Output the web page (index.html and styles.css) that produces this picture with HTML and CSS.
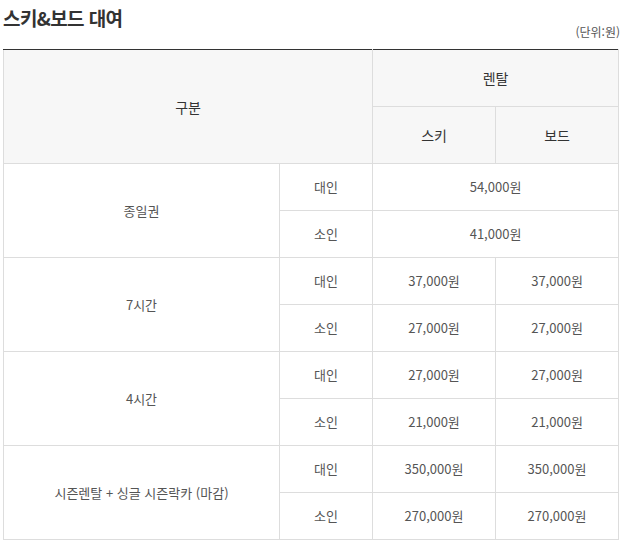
FILE: index.html
```html
<!DOCTYPE html>
<html lang="ko">
<head>
<meta charset="utf-8">
<link rel="stylesheet" href="styles.css">
</head>
<body>
<div class="wrap">
  <h2 class="title">스키&amp;보드 대여</h2>
  <p class="unit">(단위:원)</p>
  <table class="rent">
    <colgroup>
      <col class="c1"><col class="c2"><col class="c3"><col class="c4">
    </colgroup>
    <thead>
      <tr class="h1">
        <th colspan="2" rowspan="2">구분</th>
        <th colspan="2">렌탈</th>
      </tr>
      <tr class="h2">
        <th>스키</th>
        <th>보드</th>
      </tr>
    </thead>
    <tbody>
      <tr>
        <td rowspan="2">종일권</td>
        <td>대인</td>
        <td colspan="2">54,000원</td>
      </tr>
      <tr>
        <td>소인</td>
        <td colspan="2">41,000원</td>
      </tr>
      <tr>
        <td rowspan="2">7시간</td>
        <td>대인</td>
        <td>37,000원</td>
        <td>37,000원</td>
      </tr>
      <tr>
        <td>소인</td>
        <td>27,000원</td>
        <td>27,000원</td>
      </tr>
      <tr>
        <td rowspan="2">4시간</td>
        <td>대인</td>
        <td>27,000원</td>
        <td>27,000원</td>
      </tr>
      <tr>
        <td>소인</td>
        <td>21,000원</td>
        <td>21,000원</td>
      </tr>
      <tr>
        <td rowspan="2">시즌렌탈 + 싱글 시즌락카 (마감)</td>
        <td>대인</td>
        <td>350,000원</td>
        <td>350,000원</td>
      </tr>
      <tr>
        <td>소인</td>
        <td>270,000원</td>
        <td>270,000원</td>
      </tr>
    </tbody>
  </table>
</div>
</body>
</html>
```

FILE: styles.css
```css
html, body {
  margin: 0;
  padding: 0;
  background: #fff;
}
body {
  font-family: "Noto Sans CJK KR", "Noto Sans", sans-serif;
  color: #555;
}
.wrap {
  padding: 0 4px 0 3px;
}
.title {
  margin: 0;
  padding-top: 5px;
  font-size: 19px;
  line-height: 26px;
  font-weight: bold;
  color: #333;
  letter-spacing: -0.6px;
}
.unit {
  margin: -7px -2px 9px 0;
  text-align: right;
  font-size: 12px;
  line-height: 16px;
  color: #555;
}
.rent {
  width: 615px;
  border-collapse: collapse;
  table-layout: fixed;
  border-top: 1px solid #333;
  font-size: 13px;
}
.c1 { width: 276px; }
.c2 { width: 93px; }
.c3 { width: 123px; }
.c4 { width: 123px; }
.rent th, .rent td {
  border: 1px solid #ddd;
  text-align: center;
  vertical-align: middle;
  padding: 0;
}
.rent thead tr:first-child th {
  border-top: 1px solid #333;
}
.rent th {
  background: #f7f7f7;
  font-weight: normal;
  color: #333;
  font-size: 14px;
}
.h1 th, .h2 th {
  height: 56px;
}
.rent td {
  height: 46px;
  line-height: 18px;
}
```
